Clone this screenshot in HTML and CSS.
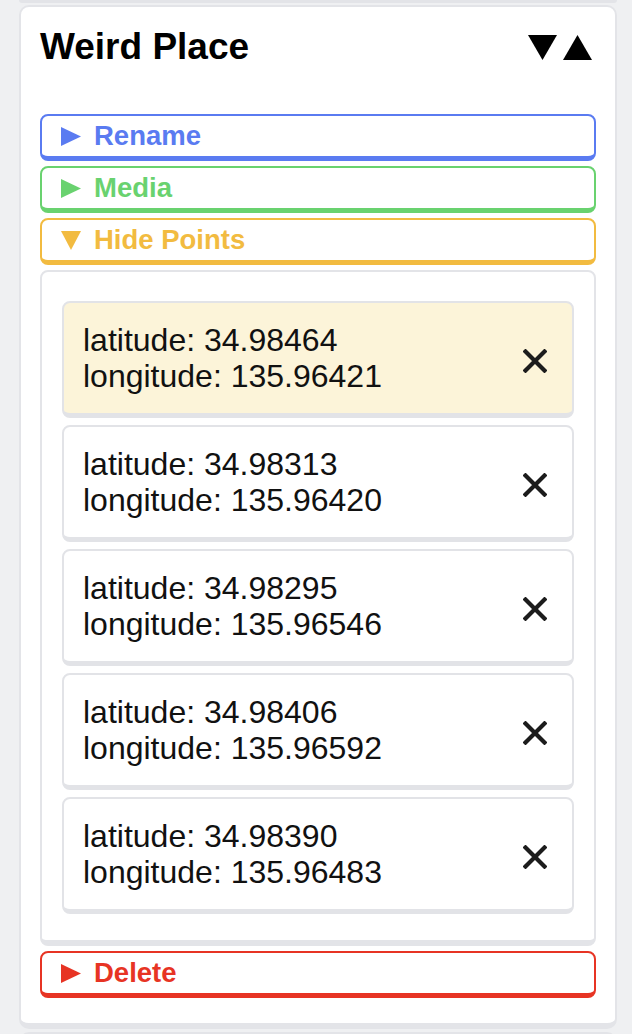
FILE: index.html
```html
<!DOCTYPE html>
<html>
<head>
<meta charset="utf-8">
<link rel="stylesheet" href="styles.css">
</head>
<body>
<div class="prev-card"></div>
<section class="card">
  <header class="card-header">
    <h1 class="title">Weird Place</h1>
    <div class="order">
      <svg width="29" height="25" viewBox="0 0 29 25"><polygon points="0,0 29,0 14.5,25" fill="#000"/></svg>
      <svg width="29" height="25" viewBox="0 0 29 25"><polygon points="14.5,0 29,25 0,25" fill="#000"/></svg>
    </div>
  </header>

  <button class="toggle blue">
    <svg class="tri" width="20" height="19" viewBox="0 0 20 19"><polygon points="0,0 20,9.5 0,19" fill="currentColor"/></svg>
    <span>Rename</span>
  </button>
  <button class="toggle green">
    <svg class="tri" width="20" height="19" viewBox="0 0 20 19"><polygon points="0,0 20,9.5 0,19" fill="currentColor"/></svg>
    <span>Media</span>
  </button>
  <button class="toggle yellow">
    <svg class="tri" width="20" height="19" viewBox="0 0 20 19"><polygon points="0,0 20,0 10,19" fill="currentColor"/></svg>
    <span>Hide Points</span>
  </button>

  <div class="points">
    <div class="point active">
      <div class="coords"><div>latitude: 34.98464</div><div>longitude: 135.96421</div></div>
      <svg class="x" width="24" height="24" viewBox="0 0 24 24"><path d="M2.5 2.5 L21.5 21.5 M21.5 2.5 L2.5 21.5" stroke="#1c1c1c" stroke-width="4.2" stroke-linecap="square"/></svg>
    </div>
    <div class="point">
      <div class="coords"><div>latitude: 34.98313</div><div>longitude: 135.96420</div></div>
      <svg class="x" width="24" height="24" viewBox="0 0 24 24"><path d="M2.5 2.5 L21.5 21.5 M21.5 2.5 L2.5 21.5" stroke="#1c1c1c" stroke-width="4.2" stroke-linecap="square"/></svg>
    </div>
    <div class="point">
      <div class="coords"><div>latitude: 34.98295</div><div>longitude: 135.96546</div></div>
      <svg class="x" width="24" height="24" viewBox="0 0 24 24"><path d="M2.5 2.5 L21.5 21.5 M21.5 2.5 L2.5 21.5" stroke="#1c1c1c" stroke-width="4.2" stroke-linecap="square"/></svg>
    </div>
    <div class="point">
      <div class="coords"><div>latitude: 34.98406</div><div>longitude: 135.96592</div></div>
      <svg class="x" width="24" height="24" viewBox="0 0 24 24"><path d="M2.5 2.5 L21.5 21.5 M21.5 2.5 L2.5 21.5" stroke="#1c1c1c" stroke-width="4.2" stroke-linecap="square"/></svg>
    </div>
    <div class="point">
      <div class="coords"><div>latitude: 34.98390</div><div>longitude: 135.96483</div></div>
      <svg class="x" width="24" height="24" viewBox="0 0 24 24"><path d="M2.5 2.5 L21.5 21.5 M21.5 2.5 L2.5 21.5" stroke="#1c1c1c" stroke-width="4.2" stroke-linecap="square"/></svg>
    </div>
  </div>

  <button class="toggle red">
    <svg class="tri" width="20" height="19" viewBox="0 0 20 19"><polygon points="0,0 20,9.5 0,19" fill="currentColor"/></svg>
    <span>Delete</span>
  </button>
</section>
<div class="next-card"></div>
</body>
</html>
```

FILE: styles.css
```css
* { box-sizing: border-box; }

html, body {
  margin: 0;
  padding: 0;
  background: #eff0f2;
  font-family: "Liberation Sans", Arial, Helvetica, sans-serif;
  overflow: hidden;
}

.prev-card {
  height: 3px;
  margin: 0 15px 2px 19px;
  background: #e3e4e8;
  border-radius: 0 0 8px 8px;
}

.card {
  margin: 0 15px 0 19px;
  background: #fff;
  border: 2px solid #e3e4e8;
  border-bottom-width: 6px;
  border-radius: 10px;
  padding: 18px 19px 25px 19px;
  display: flex;
  flex-direction: column;
  gap: 5px;
}

.card-header {
  display: flex;
  justify-content: space-between;
  align-items: center;
  margin-bottom: 40px;
}

.title {
  margin: 0;
  font-size: 37px;
  line-height: 44px;
  font-weight: 700;
  color: #000;
}

.order {
  display: flex;
  gap: 6px;
  padding-right: 4px;
  margin-top: 0;
}

.toggle {
  display: flex;
  align-items: center;
  gap: 13px;
  height: 47px;
  padding: 0 0 0 19px;
  background: #fff;
  border: 2px solid currentColor;
  border-bottom-width: 5px;
  border-radius: 8px;
  font-family: inherit;
  font-size: 27.5px;
  font-weight: 700;
  text-align: left;
  width: 100%;
}

.toggle span { line-height: 40px; }
.tri { flex: none; margin-top: 1px; }

.blue { color: #5a7bf1; }
.green { color: #69d26f; }
.yellow { color: #f2bb40; }
.red { color: #e73424; }

.points {
  border: 2px solid #e3e4e8;
  border-bottom-width: 6px;
  border-radius: 8px;
  padding: 29px 20px 26px 20px;
  display: flex;
  flex-direction: column;
  gap: 7px;
}

.point {
  display: flex;
  align-items: center;
  justify-content: space-between;
  background: #fff;
  border: 2px solid #e2e3e7;
  border-bottom-width: 5px;
  border-radius: 8px;
  padding: 19px 25px 19px 19px;
  height: 117px;
}

.point.active { background: #fcf4d9; }

.coords {
  font-size: 32px;
  line-height: 36px;
  color: #111;
}

.x { flex: none; margin-top: 6px; }

.next-card {
  margin: 3px 15px 0 19px;
  height: 40px;
  background: #fff;
  border: 2px solid #e3e4e8;
  border-bottom: none;
  border-radius: 10px 10px 0 0;
}
```
